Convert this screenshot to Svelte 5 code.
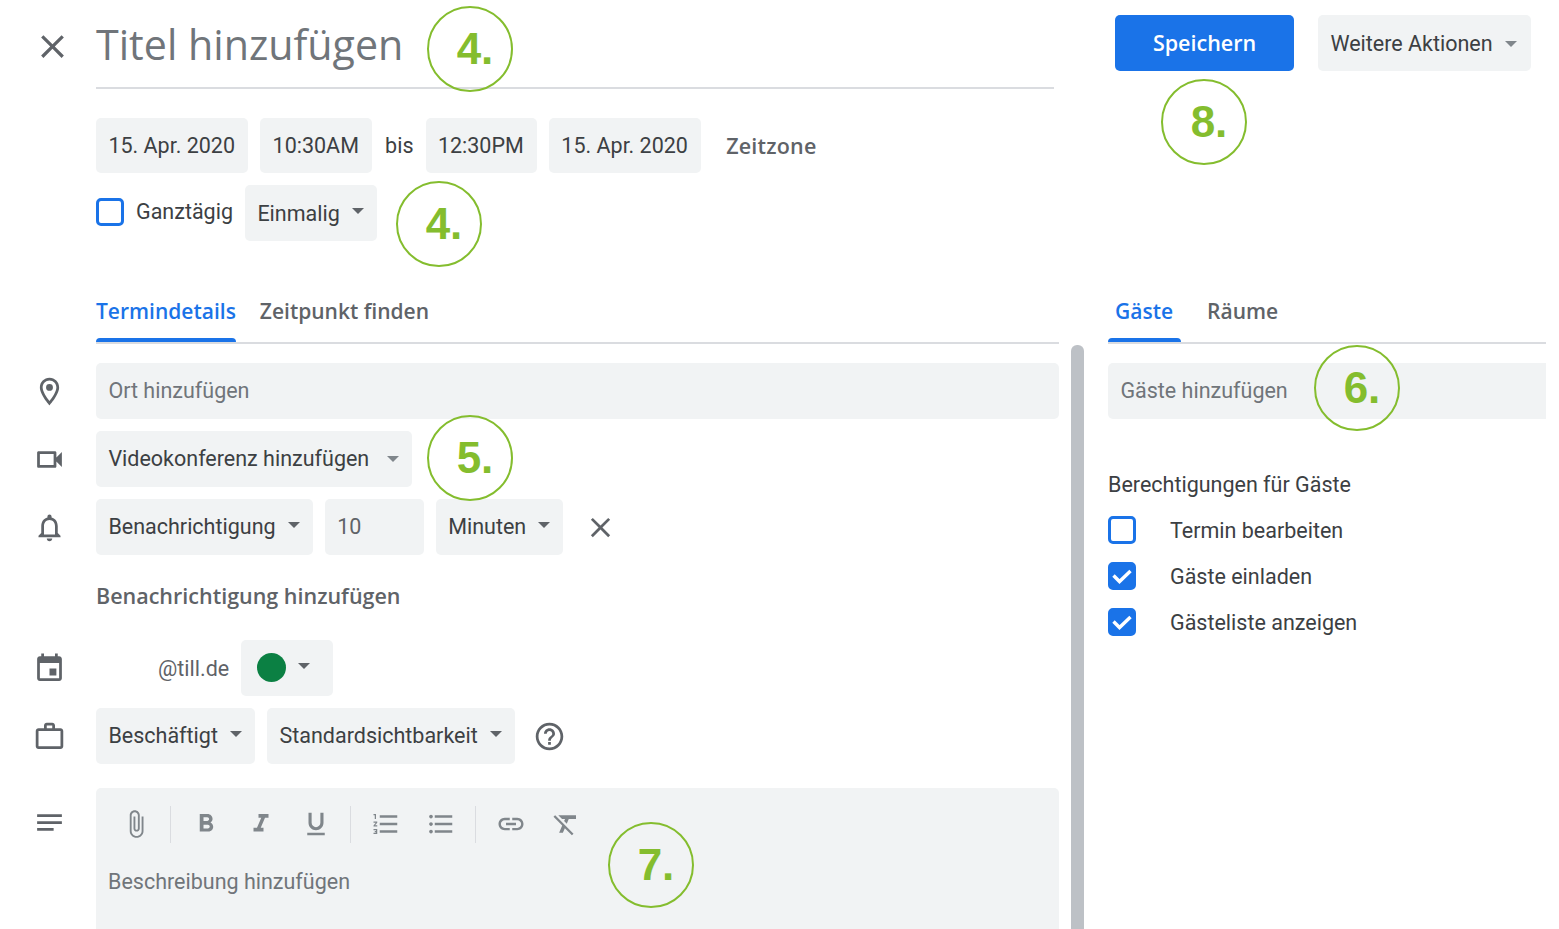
<script>
	const icons = {
		close: 'M19 6.41L17.59 5 12 10.59 6.41 5 5 6.41 10.59 12 5 17.59 6.41 19 12 13.41 17.59 19 19 17.59 13.41 12z',
		place: 'M12 2C8.13 2 5 5.13 5 9c0 5.25 7 13 7 13s7-7.75 7-13c0-3.87-3.13-7-7-7zM7 9c0-2.76 2.24-5 5-5s5 2.24 5 5c0 2.88-2.88 7.19-5 9.88C9.92 16.21 7 11.85 7 9zM12 6.5a2.5 2.5 0 1 0 0 5 2.5 2.5 0 0 0 0-5z',
		video: 'M15 8v8H5V8h10m1-2H4c-.55 0-1 .45-1 1v10c0 .55.45 1 1 1h12c.55 0 1-.45 1-1v-3.5l4 4v-11l-4 4V7c0-.55-.45-1-1-1z',
		bell: 'M12 22c1.1 0 2-.9 2-2h-4c0 1.1.9 2 2 2zm6-6v-5c0-3.07-1.63-5.64-4.5-6.32V4c0-.83-.67-1.5-1.5-1.5s-1.5.67-1.5 1.5v.68C7.64 5.36 6 7.92 6 11v5l-2 2v1h16v-1l-2-2zm-2 1H8v-6c0-2.48 1.51-4.5 4-4.5s4 2.02 4 4.5v6z',
		event: 'M17 12h-5v5h5v-5zM16 1v2H8V1H6v2H5c-1.11 0-1.99.9-1.99 2L3 19c0 1.1.89 2 2 2h14c1.1 0 2-.9 2-2V5c0-1.1-.9-2-2-2h-1V1h-2zm3 18H5V8h14v11z',
		work: 'M14 6V4h-4v2h4zM4 8v11h16V8H4zm16-2c1.11 0 2 .89 2 2v11c0 1.11-.89 2-2 2H4c-1.11 0-2-.89-2-2l.01-11c0-1.11.88-2 1.99-2h4V4c0-1.11.89-2 2-2h4c1.11 0 2 .89 2 2v2h4z',
		notes: 'M3 18h12v-2H3v2zM3 6v2h18V6H3zm0 7h18v-2H3v2z',
		help: 'M11 18h2v-2h-2v2zm1-16C6.48 2 2 6.48 2 12s4.48 10 10 10 10-4.48 10-10S17.52 2 12 2zm0 18c-4.41 0-8-3.59-8-8s3.59-8 8-8 8 3.59 8 8-3.59 8-8 8zm0-14c-2.21 0-4 1.79-4 4h2c0-1.1.9-2 2-2s2 .9 2 2c0 2-3 1.75-3 5h2c0-2.25 3-2.5 3-5 0-2.21-1.79-4-4-4z',
		attach: 'M16.5 6v11.5c0 2.21-1.79 4-4 4s-4-1.79-4-4V5c0-1.38 1.12-2.5 2.5-2.5s2.5 1.12 2.5 2.5v10.5c0 .55-.45 1-1 1s-1-.45-1-1V6H10v9.5c0 1.38 1.12 2.5 2.5 2.5s2.5-1.12 2.5-2.5V5c0-2.21-1.79-4-4-4S7 2.79 7 5v12.5c0 3.04 2.46 5.5 5.5 5.5s5.5-2.46 5.5-5.5V6h-1.5z',
		bold: 'M15.6 10.79c.97-.67 1.65-1.77 1.65-2.79 0-2.26-1.75-4-4-4H7v14h7.04c2.09 0 3.71-1.7 3.71-3.79 0-1.52-.86-2.82-2.15-3.42zM10 6.5h3c.83 0 1.5.67 1.5 1.5s-.67 1.5-1.5 1.5h-3v-3zm3.5 9H10v-3h3.5c.83 0 1.5.67 1.5 1.5s-.67 1.5-1.5 1.5z',
		italic: 'M10 4v3h2.21l-3.42 8H6v3h8v-3h-2.21l3.42-8H18V4z',
		underline: 'M12 17c3.31 0 6-2.69 6-6V3h-2.5v8c0 1.93-1.57 3.5-3.5 3.5S8.5 12.93 8.5 11V3H6v8c0 3.31 2.69 6 6 6zm-7 2v2h14v-2H5z',
		ol: 'M2 17h2v.5H3v1h1v.5H2v1h3v-4H2v1zm1-9h1V4H2v1h1v3zm-1 3h1.8L2 13.1v.9h3v-1H3.2L5 10.9V10H2v1zm5-6v2h14V5H7zm0 14h14v-2H7v2zm0-6h14v-2H7v2z',
		ul: 'M4 10.5c-.83 0-1.5.67-1.5 1.5s.67 1.5 1.5 1.5 1.5-.67 1.5-1.5-.67-1.5-1.5-1.5zm0-6c-.83 0-1.5.67-1.5 1.5S3.17 7.5 4 7.5 5.5 6.83 5.5 6 4.83 4.5 4 4.5zm0 12c-.83 0-1.5.68-1.5 1.5s.68 1.5 1.5 1.5 1.5-.68 1.5-1.5-.67-1.5-1.5-1.5zM7 19h14v-2H7v2zm0-6h14v-2H7v2zm0-8v2h14V5H7z',
		link: 'M3.9 12c0-1.71 1.39-3.1 3.1-3.1h4V7H7c-2.76 0-5 2.24-5 5s2.24 5 5 5h4v-1.9H7c-1.71 0-3.1-1.39-3.1-3.1zM8 13h8v-2H8v2zm9-6h-4v1.9h4c1.71 0 3.1 1.39 3.1 3.1s-1.39 3.1-3.1 3.1h-4V17h4c2.76 0 5-2.24 5-5s-2.24-5-5-5z',
		clear: 'M3.27 5L2 6.27l6.97 6.97L6.5 19h3l1.57-3.66L16.73 21 18 19.73 3.55 5.27 3.27 5zM6 5v.18L8.82 8h2.4l-.72 1.68 2.1 2.1L14.21 8H20V5H6z'
	};

	const toolbar = [['attach'], ['bold', 'italic', 'underline'], ['ol', 'ul'], ['link', 'clear']];

	const perms = [
		{ label: 'Termin bearbeiten', on: false },
		{ label: 'Gäste einladen', on: true },
		{ label: 'Gästeliste anzeigen', on: true }
	];

	// green callouts drawn over the screenshot
	const callouts = [
		{ n: '4.', x: 427, y: 6 },
		{ n: '4.', x: 396, y: 181 },
		{ n: '8.', x: 1161, y: 79 },
		{ n: '6.', x: 1314, y: 345 },
		{ n: '5.', x: 427, y: 415 },
		{ n: '7.', x: 608, y: 822 }
	];
</script>

{#snippet icon(name, cls = '')}
	<svg class="icon {cls}" viewBox="0 0 24 24"><path d={icons[name]} /></svg>
{/snippet}

{#snippet chip(label, soft = false)}
	<div class="chip">{label}<span class="caret" class:soft></span></div>
{/snippet}

<div class="page">
	<div class="left">
		<div class="head">
			<div class="gutter close">{@render icon('close', 'x-large')}</div>
			<div class="title">Titel hinzufügen</div>
		</div>

		<div class="when">
			<div class="chip">15. Apr. 2020</div>
			<div class="chip">10:30AM</div>
			<span class="bis">bis</span>
			<div class="chip">12:30PM</div>
			<div class="chip">15. Apr. 2020</div>
			<span class="zone">Zeitzone</span>
		</div>

		<div class="when second">
			<span class="box"></span>
			<span class="allday">Ganztägig</span>
			{@render chip('Einmalig')}
		</div>

		<div class="tabs main-tabs">
			<div class="tab active">Termindetails</div>
			<div class="tab">Zeitpunkt finden</div>
		</div>

		<div class="body">
			<div class="form">
				<div class="row">
					<div class="gutter">{@render icon('place')}</div>
					<div class="field grow muted">Ort hinzufügen</div>
				</div>
				<div class="row">
					<div class="gutter">{@render icon('video')}</div>
					{@render chip('Videokonferenz hinzufügen', true)}
				</div>
				<div class="row">
					<div class="gutter">{@render icon('bell')}</div>
					{@render chip('Benachrichtigung')}
					<div class="chip number">10</div>
					{@render chip('Minuten')}
					<div class="remove">{@render icon('close', 'x-small')}</div>
				</div>
				<div class="row add">
					<div class="gutter"></div>
					<span class="add-link">Benachrichtigung hinzufügen</span>
				</div>
				<div class="row">
					<div class="gutter">{@render icon('event')}</div>
					<span class="owner">@till.de</span>
					<div class="chip colour"><span class="dot"></span><span class="caret"></span></div>
				</div>
				<div class="row">
					<div class="gutter">{@render icon('work')}</div>
					{@render chip('Beschäftigt')}
					{@render chip('Standardsichtbarkeit')}
					<div class="help">{@render icon('help')}</div>
				</div>
				<div class="row desc-row">
					<div class="gutter notes">{@render icon('notes')}</div>
					<div class="desc">
						<div class="toolbar">
							{#each toolbar as group, g}
								{#if g > 0}<span class="sep"></span>{/if}
								{#each group as name}
									<span class="tool">{@render icon(name)}</span>
								{/each}
							{/each}
						</div>
						<div class="muted desc-text">Beschreibung hinzufügen</div>
					</div>
				</div>
			</div>
			<div class="scrollbar"></div>
		</div>
	</div>

	<div class="right">
		<div class="actions">
			<button class="save">Speichern</button>
			<div class="chip more">Weitere Aktionen<span class="caret soft"></span></div>
		</div>

		<div class="tabs side-tabs">
			<div class="tab active">Gäste</div>
			<div class="tab">Räume</div>
		</div>

		<div class="field muted guests">Gäste hinzufügen</div>

		<div class="perm-title">Berechtigungen für Gäste</div>
		{#each perms as p}
			<div class="perm">
				<span class="box" class:on={p.on}>
					{#if p.on}
						<svg viewBox="0 0 22 22"><path d="M2.5 10.5l6 6L19.5 6" /></svg>
					{/if}
				</span>
				<span>{p.label}</span>
			</div>
		{/each}
	</div>

	{#each callouts as c}
		<div class="callout" style:left="{c.x}px" style:top="{c.y}px">{c.n}</div>
	{/each}
</div>

<style>
	:global(body) {
		margin: 0;
		background: #fff;
	}
	.page {
		position: relative;
		display: flex;
		width: 1559px;
		height: 929px;
		overflow: hidden;
		font-family: Roboto, "Liberation Sans", sans-serif;
		font-size: 21.5px;
		color: #3c4043;
	}
	.left {
		width: 1108px;
		flex: none;
	}
	.right {
		width: 438px;
		flex: none;
	}
	.icon {
		display: block;
		width: 33px;
		height: 33px;
		fill: #5f6368;
	}
	.x-large {
		width: 39px;
		height: 39px;
	}
	.gutter {
		width: 96px;
		flex: none;
		display: flex;
		padding-left: 33px;
		box-sizing: border-box;
	}

	.head {
		display: flex;
		height: 89px;
	}
	.close {
		padding: 27px 0 0 33px;
	}
	.title {
		width: 958px;
		box-sizing: border-box;
		border-bottom: 2px solid #dadce0;
		font-family: "Open Sans", Roboto, sans-serif;
		font-size: 41.2px;
		line-height: 88px;
		color: #70757a;
	}

	.when {
		display: flex;
		align-items: center;
		gap: 12px;
		margin: 29px 0 0 96px;
		height: 55px;
	}
	.when.second {
		margin-top: 12px;
		height: 56px;
	}
	.chip,
	.field {
		display: flex;
		align-items: center;
		box-sizing: border-box;
		height: 100%;
		padding: 0 13.2px 0 12.4px;
		background: #f1f3f4;
		border-radius: 5px;
		white-space: nowrap;
	}
	.row .chip,
	.field {
		padding-bottom: 1px;
	}
	.caret {
		width: 0;
		height: 0;
		margin: -4px 0 0 12px;
		border: 6.5px solid transparent;
		border-top: 6.5px solid #5f6368;
		border-bottom: 0;
	}
	.caret.soft {
		margin-top: 1px;
		border-top-color: #80868b;
	}
	.row .caret.soft {
		margin-left: 18px;
	}
	.bis {
		margin: 0 0 0 1px;
	}
	.zone {
		margin: -1px 0 0 13px;
		color: #5f6368;
		font-family: "Open Sans", Roboto, sans-serif;
		font-size: 21.5px;
		font-weight: 600;
		letter-spacing: 0.2px;
	}
	.box {
		display: flex;
		align-items: center;
		justify-content: center;
		width: 28px;
		height: 28px;
		box-sizing: border-box;
		border: 3px solid #1a73e8;
		border-radius: 5px;
		flex: none;
	}
	.second .box {
		margin-top: -2px;
	}
	.box.on {
		background: #1a73e8;
	}
	.box svg {
		width: 22px;
		height: 22px;
		fill: none;
		stroke: #fff;
		stroke-width: 3.4;
		overflow: visible;
	}
	.allday {
		margin-top: -4px;
	}

	.tabs {
		display: flex;
		align-items: flex-end;
		height: 51px;
		box-sizing: border-box;
		border-bottom: 2px solid #dadce0;
		font-family: "Open Sans", Roboto, sans-serif;
		font-size: 21px;
		font-weight: 600;
		color: #5f6368;
	}
	.main-tabs {
		margin: 52px 0 0 96px;
		width: 963px;
		gap: 24px;
	}
	.side-tabs {
		margin-top: 222px;
		gap: 26px;
	}
	.tab {
		position: relative;
		height: 49px;
		line-height: 36px;
	}
	.tab.active {
		color: #1a73e8;
	}
	.tab.active::after {
		content: "";
		position: absolute;
		left: 0;
		right: 0;
		bottom: 0;
		height: 4px;
		background: #1a73e8;
		border-radius: 4px 4px 0 0;
	}
	.side-tabs .tab.active {
		padding: 0 8px 0 7px;
	}

	.body {
		display: flex;
		align-items: flex-start;
	}
	.form {
		width: 1059px;
		flex: none;
		padding-top: 19px;
		display: flex;
		flex-direction: column;
		gap: 12px;
	}
	.scrollbar {
		width: 13px;
		height: 600px;
		margin: 1px 0 0 12px;
		background: #bdc1c6;
		border-radius: 6px 6px 0 0;
	}
	.row {
		display: flex;
		align-items: center;
		gap: 12px;
		height: 56px;
	}
	.row .gutter {
		margin-right: -12px;
	}
	.grow {
		flex: 1;
	}
	.muted {
		color: #70757a;
	}
	.number {
		width: 99px;
		color: #5f6368;
	}
	.remove {
		margin-left: 9px;
	}
	.row.add {
		height: 61px;
	}
	.add-link {
		margin-top: -4px;
		font-family: "Open Sans", Roboto, sans-serif;
		font-size: 21.5px;
		font-weight: 600;
		color: #5f6368;
	}
	.owner {
		margin-left: 62px;
		color: #5f6368;
	}
	.colour {
		padding-left: 16px;
		width: 92px;
	}
	.dot {
		width: 29px;
		height: 29px;
		flex: none;
		border-radius: 50%;
		background: #0b8043;
	}
	.help {
		margin-left: 6px;
	}
	.row.desc-row {
		align-items: flex-start;
		height: 160px;
		margin-top: 12px;
	}
	.notes {
		padding-top: 18px;
	}
	.desc {
		flex: 1;
		height: 160px;
		background: #f1f3f4;
		border-radius: 5px 5px 0 0;
		padding: 8px 12px 0;
	}
	.toolbar {
		display: flex;
		align-items: center;
		height: 56px;
	}
	.tool {
		width: 55px;
		display: flex;
		justify-content: center;
	}
	.tool .icon {
		width: 30px;
		height: 30px;
		fill: #80868b;
	}
	.sep {
		width: 1px;
		height: 37px;
		margin: 0 7px;
		background: #dadce0;
	}
	.desc-text {
		margin-top: 12px;
		line-height: 36px;
	}

	.actions {
		display: flex;
		gap: 24px;
		height: 56px;
		margin: 15px 0 0 7px;
	}
	.save {
		width: 179px;
		height: 56px;
		padding: 0 0 2px;
		border: 0;
		border-radius: 5px;
		background: #1a73e8;
		color: #fff;
		font: 600 21.5px "Open Sans", Roboto, sans-serif;
	}
	.more {
		width: 213px;
	}
	.guests {
		height: 56px;
		margin-top: 19px;
		border-radius: 5px 0 0 5px;
	}
	.perm-title {
		margin-top: 48px;
		line-height: 36px;
	}
	.perm {
		display: flex;
		align-items: center;
		gap: 34px;
		height: 46px;
	}
	.perm-title + .perm {
		margin-top: 4px;
	}

	.callout {
		position: absolute;
		width: 86px;
		height: 86px;
		box-sizing: border-box;
		border: 2px solid #84bd2e;
		border-radius: 50%;
		display: flex;
		align-items: center;
		justify-content: center;
		padding-left: 10px;
		font: 700 44px "Liberation Sans", Arial, sans-serif;
		color: #84bd2e;
	}
</style>
